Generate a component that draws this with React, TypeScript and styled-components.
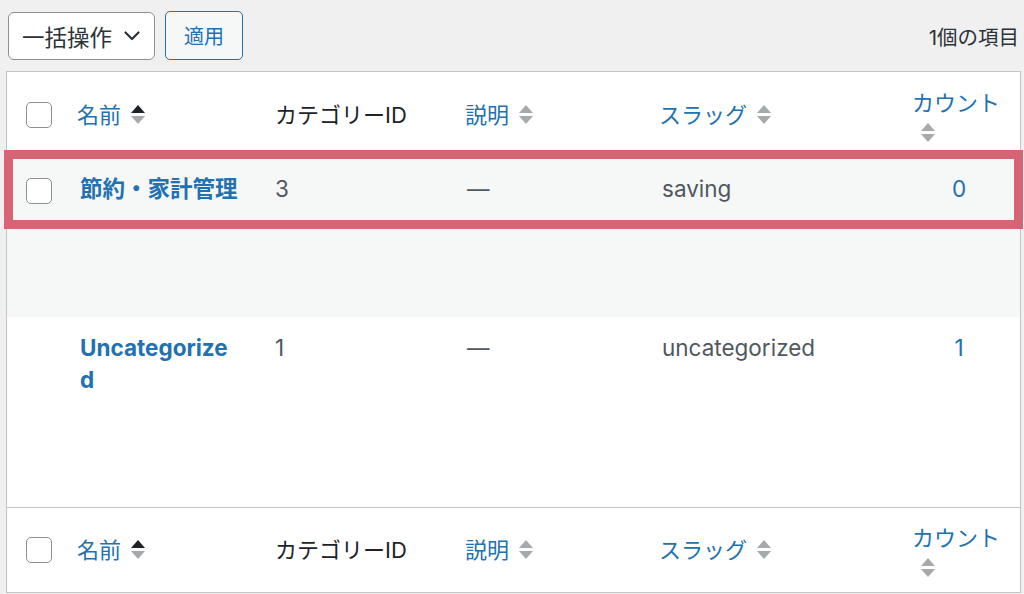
import React from "react";
import styled, { createGlobalStyle } from "styled-components";

const GlobalStyle = createGlobalStyle`
  html, body { margin: 0; padding: 0; background: #f0f0f1; }
  body {
    font-family: Inter, "Liberation Sans", "Noto Sans CJK JP", sans-serif;
    color: #3c434a;
  }
  * { box-sizing: border-box; }
`;

const Page = styled.div`
  position: relative;
  width: 1024px;
  height: 594px;
  overflow: hidden;
`;

const Toolbar = styled.div`
  display: flex;
  align-items: center;
  height: 71px;
  padding: 0 5px 0 8px;
`;

const Select = styled.div`
  display: flex;
  align-items: center;
  justify-content: space-between;
  width: 147px;
  height: 48px;
  padding: 0 14px 0 13px;
  background: #fff;
  border: 1px solid #8c8f94;
  border-radius: 6px;
  font-size: 22.5px;
  color: #2c3338;
`;

const ApplyButton = styled.button`
  margin-left: 10px;
  width: 78px;
  height: 49px;
  background: #f6f7f7;
  border: 1px solid #2271b1;
  border-radius: 5px;
  color: #2271b1;
  font-family: inherit;
  font-size: 20px;
  padding: 0;
`;

const ItemCount = styled.span`
  margin-left: auto;
  font-size: 20.5px;
  color: #2c3338;
`;

const Table = styled.table`
  margin-left: 6px;
  width: 1015px;
  table-layout: fixed;
  border-collapse: separate;
  border-spacing: 0;
  background: #fff;
  border: 1px solid #c3c4c7;
`;

const Row = styled.tr<{ $h: number; $striped?: boolean }>`
  height: ${(p) => p.$h}px;
  background: ${(p) => (p.$striped ? "#f6f7f7" : "#fff")};
`;

const Th = styled.th<{ $pl?: number; $pr?: number; $foot?: boolean; $center?: boolean }>`
  padding: 0 ${(p) => p.$pr ?? 0}px 0 ${(p) => p.$pl ?? 14}px;
  vertical-align: middle;
  text-align: ${(p) => (p.$center ? "center" : "left")};
  font-size: 22px;
  font-weight: 400;
  line-height: 32px;
  color: #1d2327;
  ${(p) =>
    p.$foot
      ? "border-top: 1px solid #c3c4c7;"
      : "border-bottom: 1px solid #c3c4c7;"}
`;

const Td = styled.td<{ $pl?: number; $center?: boolean; $pt?: number }>`
  padding: ${(p) => p.$pt ?? 15}px 0 0 ${(p) => p.$pl ?? 14}px;
  vertical-align: top;
  text-align: ${(p) => (p.$center ? "center" : "left")};
  font-size: 22.5px;
  line-height: 32px;
  color: #50575e;
`;

const Checkbox = styled.input.attrs({ type: "checkbox" })`
  appearance: none;
  display: block;
  margin: 0;
  width: 26px;
  height: 26px;
  background: #fff;
  border: 1.5px solid #8c8f94;
  border-radius: 5px;
`;

const SortLink = styled.a`
  display: inline-flex;
  align-items: center;
  gap: 10px;
  color: #2271b1;
  text-decoration: none;
`;

const StackedSort = styled.a`
  display: inline-flex;
  flex-direction: column;
  align-items: flex-start;
  gap: 4px;
  color: #2271b1;
  text-decoration: none;
  text-align: left;
`;

const ArrowsSlot = styled.span`
  display: block;
  margin-left: 9px;
  line-height: 0;
`;

const RowTitle = styled.a`
  display: block;
  width: 159px;
  font-weight: 700;
  color: #2271b1;
  text-decoration: none;
  word-break: break-all;
`;

const CountLink = styled.a`
  color: #2271b1;
  text-decoration: none;
`;

const Highlight = styled.div`
  position: absolute;
  left: 4px;
  top: 150px;
  width: 1019px;
  height: 79px;
  border: 9px solid #d66474;
  pointer-events: none;
`;

const Arrows = ({ active }: { active?: boolean }) => (
  <svg width="14" height="20" viewBox="0 0 14 20" style={{ display: "block" }}>
    <polygon points="0,8 7,0 14,8" fill={active ? "#1d2327" : "#a7aaad"} />
    <polygon points="0,11 14,11 7,19" fill="#a7aaad" />
  </svg>
);

const Chevron = () => (
  <svg width="16" height="10" viewBox="0 0 16 10">
    <polyline
      points="1.5,1.5 8,8 14.5,1.5"
      fill="none"
      stroke="#2c3338"
      strokeWidth="2.2"
      strokeLinecap="round"
      strokeLinejoin="round"
    />
  </svg>
);

const HeaderCells = ({ foot }: { foot?: boolean }) => (
  <Row $h={foot ? 85 : 86}>
    <Th $pl={19} $foot={foot}>
      <Checkbox />
    </Th>
    <Th $foot={foot}>
      <SortLink href="#">
        名前
        <Arrows active />
      </SortLink>
    </Th>
    <Th $foot={foot}>カテゴリーID</Th>
    <Th $foot={foot}>
      <SortLink href="#">
        説明
        <Arrows />
      </SortLink>
    </Th>
    <Th $foot={foot}>
      <SortLink href="#">
        スラッグ
        <Arrows />
      </SortLink>
    </Th>
    <Th $foot={foot} $pl={0} $pr={6} $center>
      <StackedSort href="#">
        カウント
        <ArrowsSlot>
          <Arrows />
        </ArrowsSlot>
      </StackedSort>
    </Th>
  </Row>
);

export default function App() {
  return (
    <Page>
      <GlobalStyle />
      <Toolbar>
        <Select>
          一括操作
          <Chevron />
        </Select>
        <ApplyButton>適用</ApplyButton>
        <ItemCount>1個の項目</ItemCount>
      </Toolbar>
      <Table>
        <colgroup>
          <col style={{ width: 56 }} />
          <col style={{ width: 198 }} />
          <col style={{ width: 190 }} />
          <col style={{ width: 194 }} />
          <col style={{ width: 253 }} />
          <col style={{ width: 122 }} />
        </colgroup>
        <thead>
          <HeaderCells />
        </thead>
        <tbody>
          <Row $h={159} $striped>
            <Td $pl={19} $pt={20}>
              <Checkbox />
            </Td>
            <Td $pl={17}>
              <RowTitle href="#">節約・家計管理</RowTitle>
            </Td>
            <Td>3</Td>
            <Td $pl={16}>—</Td>
            <Td $pl={17}>saving</Td>
            <Td $pl={0} $center>
              <CountLink href="#">0</CountLink>
            </Td>
          </Row>
          <Row $h={190}>
            <Td $pl={19} />
            <Td $pl={17}>
              <RowTitle href="#">Uncategorized</RowTitle>
            </Td>
            <Td>1</Td>
            <Td $pl={16}>—</Td>
            <Td $pl={17}>uncategorized</Td>
            <Td $pl={0} $center>
              <CountLink href="#">1</CountLink>
            </Td>
          </Row>
        </tbody>
        <tfoot>
          <HeaderCells foot />
        </tfoot>
      </Table>
      <Highlight />
    </Page>
  );
}
